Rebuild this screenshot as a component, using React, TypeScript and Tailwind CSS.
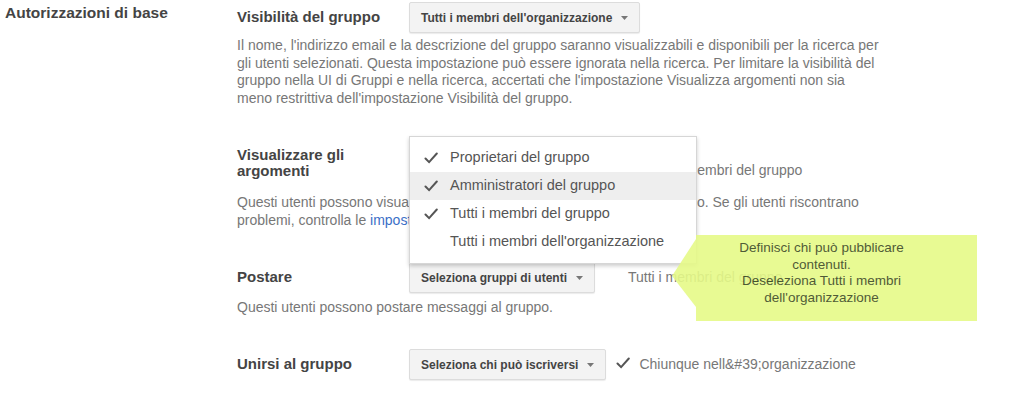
const FONT = { fontFamily: '"Liberation Sans", Arial, sans-serif' };

function Caret() {
	return (
		<svg
			aria-hidden="true"
			className="ml-[9px] inline-block"
			height="4"
			viewBox="0 0 7 4"
			width="7"
		>
			<path d="M0 0h7L3.5 4z" fill="#777" />
		</svg>
	);
}

function Check({ className = "" }: { className?: string }) {
	return (
		<svg
			aria-hidden="true"
			className={className}
			height="12"
			viewBox="0 0 14 12"
			width="14"
		>
			<path
				d="M1.5 6.5l3.6 3.6L12.8 1.5"
				fill="none"
				stroke="#555"
				strokeLinecap="round"
				strokeWidth="2"
			/>
		</svg>
	);
}

function SelectButton({ label }: { label: string }) {
	return (
		<button
			className="flex h-[31px] items-center rounded-[2px] border border-[#dcdcdc] bg-[#f3f3f3] px-[11px] text-[12px] font-bold text-[#444] shadow-[0_1px_1px_rgba(0,0,0,0.08)]"
			type="button"
		>
			{label}
			<Caret />
		</button>
	);
}

const MENU_ITEMS = [
	{ label: "Proprietari del gruppo", checked: true, active: false },
	{ label: "Amministratori del gruppo", checked: true, active: true },
	{ label: "Tutti i membri del gruppo", checked: true, active: false },
	{ label: "Tutti i membri dell'organizzazione", checked: false, active: false },
];

function Menu() {
	return (
		<div className="absolute left-0 top-[-11px] z-10 w-[288px] border border-[#d6d6d6] bg-white py-[7px] shadow-[0_2px_4px_rgba(0,0,0,0.2)]">
			{MENU_ITEMS.map((item) => (
				<div
					className={`flex h-[28px] items-center text-[14.5px] text-[#555] ${
						item.active ? "bg-[#eeeeee]" : ""
					}`}
					key={item.label}
				>
					<span className="flex w-[40px] justify-center pl-[2px]">
						{item.checked ? <Check /> : null}
					</span>
					{item.label}
				</div>
			))}
		</div>
	);
}

function Callout() {
	return (
		<div className="pointer-events-none absolute left-[672px] top-[235px] z-20 flex h-[86px] w-[305px] opacity-90">
			<svg
				aria-hidden="true"
				className="h-[86px] w-[24px] shrink-0"
				viewBox="0 0 24 86"
			>
				<path d="M24 4L0 41L24 72z" fill="#e6fa88" />
			</svg>
			<div className="flex h-full flex-1 justify-center bg-[#e6fa88] pr-[30px] pt-[5px] text-center text-[13.5px] leading-[16.5px] text-[#3d4a22]">
				<p>
					Definisci chi può pubblicare
					<br />
					contenuti.
					<br />
					Deseleziona Tutti i membri
					<br />
					dell'organizzazione
				</p>
			</div>
		</div>
	);
}

export default function App() {
	return (
		<main
			className="relative h-[395px] w-[1024px] overflow-hidden bg-white"
			style={FONT}
		>
			<div className="grid grid-cols-[237px_1fr]">
				<h2 className="pl-[5px] pt-[1px] text-[15.5px] font-bold text-[#444]">
					Autorizzazioni di base
				</h2>

				<div className="flex flex-col pt-[2px]">
					<section className="flex flex-col">
						<div className="flex items-center">
							<h3 className="w-[172px] pr-4 text-[15px] font-bold text-[#444]">
								Visibilità del gruppo
							</h3>
							<SelectButton label="Tutti i membri dell'organizzazione" />
						</div>
						<p className="mt-[4px] text-[14px] leading-[17.5px] whitespace-nowrap text-[#777]">
							Il nome, l'indirizzo email e la descrizione del gruppo saranno
							visualizzabili e disponibili per la ricerca per
							<br />
							gli utenti selezionati. Questa impostazione può essere ignorata
							nella ricerca. Per limitare la visibilità del
							<br />
							gruppo nella UI di Gruppi e nella ricerca, accertati che
							l'impostazione Visualizza argomenti non sia
							<br />
							meno restrittiva dell'impostazione Visibilità del gruppo.
						</p>
					</section>

					<section className="mt-[40px] flex flex-col">
						<div className="flex items-start">
							<h3 className="w-[172px] pr-6 text-[15px] font-bold leading-[16px] text-[#444]">
								Visualizzare gli argomenti
							</h3>
							<div className="relative">
								<SelectButton label="Seleziona gruppi di utenti" />
								<Menu />
							</div>
							<span className="ml-[53px] pt-[15px] text-[14px] leading-[16px] text-[#777]">
								Tutti i membri del gruppo
							</span>
						</div>
						<p className="mt-[14px] text-[14px] leading-[18px] whitespace-nowrap text-[#777]">
							Questi utenti possono visualizzare gli argomenti pubblicati in
							questo gruppo. Se gli utenti riscontrano
							<br />
							problemi, controlla le{" "}
							<a className="text-[#3b6fc7]" href="#">
								impostazioni di condivisione
							</a>
							.
						</p>
					</section>

					<section className="mt-[33px] flex flex-col">
						<div className="flex items-center">
							<h3 className="w-[172px] pr-4 text-[15px] font-bold text-[#444]">
								Postare
							</h3>
							<SelectButton label="Seleziona gruppi di utenti" />
							<span className="ml-[33px] text-[14px] text-[#777]">
								Tutti i membri del gruppo
							</span>
						</div>
						<p className="mt-[5px] text-[14px] leading-[18px] text-[#777]">
							Questi utenti possono postare messaggi al gruppo.
						</p>
					</section>

					<section className="mt-[33px] flex flex-col">
						<div className="flex items-center">
							<h3 className="w-[172px] pr-4 text-[15px] font-bold text-[#444]">
								Unirsi al gruppo
							</h3>
							<SelectButton label="Seleziona chi può iscriversi" />
							<Check className="mb-[4px] ml-[10px]" />
							<span className="ml-[9px] text-[14px] text-[#777]">
								Chiunque nell&amp;#39;organizzazione
							</span>
						</div>
					</section>
				</div>
			</div>
			<Callout />
		</main>
	);
}
